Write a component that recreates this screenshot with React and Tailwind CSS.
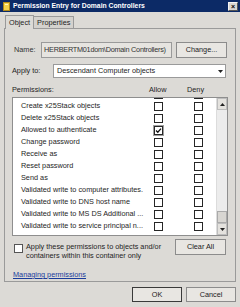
import React from "react";

function Box({ checked, focus }) {
  return (
    <div className={"flex items-center justify-center w-[11px] h-[11px] " + (focus ? "border border-[#a0a0a0] bg-[#f4f4f4]" : "")}>
      <div className="w-[9px] h-[9px] border border-[#262626] bg-white flex items-center justify-center">
        {checked ? (
          <svg width="7" height="7" viewBox="0 0 7 7">
            <path d="M1 3.5 L2.8 5.3 L6 1.6" stroke="#111" strokeWidth="1.3" fill="none" />
          </svg>
        ) : null}
      </div>
    </div>
  );
}

function Btn({ children, className = "", def }) {
  return (
    <div
      className={
        "flex items-center justify-center bg-[#e8e6e2] border " +
        (def ? "border-[#3a3a3a] " : "border-[#8c8c8c] ") +
        className
      }
    >
      <span className="text-[#222]">{children}</span>
    </div>
  );
}

const rows = [
  ["Create x25Stack objects (parent)", false],
  ["Create x25Stack objects", false],
  ["Delete x25Stack objects", false],
  ["Allowed to authenticate", true],
  ["Change password", false],
  ["Receive as", false],
  ["Reset password", false],
  ["Send as", false],
  ["Validated write to computer attributes.", false],
  ["Validated write to DNS host name", false],
  ["Validated write to MS DS Additional ...", false],
  ["Validated write to service principal n...", false],
];

export default function App() {
  return (
    <div className="w-[240px] h-[307px] bg-[#dcdad6] flex flex-col overflow-hidden font-['Liberation_Sans',sans-serif] text-[7.3px] text-[#1e1e1e] leading-none">
      {/* Title bar */}
      <div className="h-[12px] bg-[#0c2a66] flex items-center pl-[3px] pr-[2px]">
        <svg width="7" height="9" viewBox="0 0 7 9" className="shrink-0">
          <rect x="0.5" y="0.5" width="6" height="8" fill="#f3d24a" stroke="#b08a1a" />
          <rect x="2" y="2" width="3" height="1" fill="#fff7c0" />
        </svg>
        <span className="ml-[3px] text-white font-bold text-[6.8px] whitespace-nowrap">
          Permission Entry for Domain Controllers
        </span>
        <div className="ml-auto w-[10px] h-[9px] bg-[#d8d6d2] border border-[#f4f4f4] border-r-[#555] border-b-[#555] flex items-center justify-center text-[7px] font-bold text-black">
          ×
        </div>
      </div>

      {/* Tabs */}
      <div className="h-[16px] flex items-end pl-[5px]">
        <div className="h-[14px] px-[3px] flex items-center border border-b-0 border-[#9a9a9a] bg-[#dcdad6] relative top-[1px]">
          Object
        </div>
        <div className="h-[12px] px-[3px] flex items-center border border-l-0 border-b-0 border-[#9a9a9a] bg-[#d4d2ce]">
          Properties
        </div>
      </div>

      {/* Panel */}
      <div className="mx-[4px] h-[254px] border border-[#9a9a9a] flex flex-col pl-[7px] pr-[8px]">
        {/* Name */}
        <div className="mt-[13px] h-[16px] flex items-center">
          <span className="w-[29px] pl-[2px] text-[#333]">Name:</span>
          <div className="w-[131px] h-[16px] border border-[#9a9a9a] bg-[#e6e4e0] flex items-center pl-[2px] text-[#333] whitespace-nowrap overflow-hidden tracking-[-0.25px]">
            HERBERTM01dom\Domain Controllers)
          </div>
          <Btn className="ml-[4px] w-[51px] h-[16px]">Change...</Btn>
        </div>

        {/* Apply to */}
        <div className="mt-[6px] h-[14px] flex items-center">
          <span className="w-[41px]">Apply to:</span>
          <div className="w-[173px] h-[14px] border border-[#9a9a9a] bg-white flex items-center pl-[3px]">
            <span className="flex-1">Descendant Computer objects</span>
            <div className="w-[10px] h-[12px] flex items-center justify-center">
              <svg width="5" height="3" viewBox="0 0 5 3">
                <path d="M0 0 H5 L2.5 3 Z" fill="#222" />
              </svg>
            </div>
          </div>
        </div>

        {/* Permissions header */}
        <div className="mt-[7px] h-[10px] flex items-center">
          <span className="w-[137px]">Permissions:</span>
          <span className="w-[38px]">Allow</span>
          <span>Deny</span>
        </div>

        {/* List */}
        <div className="mt-[2px] w-[216px] h-[139px] border border-[#8e8e8e] bg-white flex overflow-hidden">
          <div className="flex-1 overflow-hidden">
            <div className="-mt-[10px] flex flex-col">
              {rows.map(([label, checked], i) => (
                <div key={i} className="h-[12px] flex items-center">
                  <span className="w-[140px] pl-[8px] whitespace-nowrap overflow-hidden">{label}</span>
                  <div className="w-[40px] flex">
                    <Box checked={checked} focus={checked} />
                  </div>
                  <Box />
                </div>
              ))}
            </div>
          </div>
          {/* Scrollbar */}
          <div className="w-[11px] flex flex-col bg-[#ececec] border-l border-[#dcdcdc]">
            <div className="h-[12px] bg-[#e4e2de] border border-[#bdbdbd] flex items-center justify-center">
              <svg width="5" height="3" viewBox="0 0 5 3">
                <path d="M0 3 H5 L2.5 0 Z" fill="#222" />
              </svg>
            </div>
            <div className="flex-1" />
            <div className="h-[12px] bg-[#d8d6d2] border border-[#aaa]" />
            <div className="h-[12px] bg-[#e4e2de] border border-[#bdbdbd] flex items-center justify-center">
              <svg width="5" height="3" viewBox="0 0 5 3">
                <path d="M0 0 H5 L2.5 3 Z" fill="#222" />
              </svg>
            </div>
          </div>
        </div>

        {/* Apply checkbox + Clear All */}
        <div className="mt-[3px] flex items-start">
          <div className="ml-[2px] mt-[5px] w-[9px] h-[9px] border border-[#555] bg-white" />
          <div className="ml-[3px] mt-[3px] w-[150px] leading-[9px]">
            Apply these permissions to objects and/or
            <br />
            containers within this container only
          </div>
          <Btn className="ml-[-1px] w-[51px] h-[16px]">Clear All</Btn>
        </div>

        {/* Link */}
        <div className="mt-[11px] pl-[1px]">
          <span className="text-[#1a3c9c] underline">Managing permissions</span>
        </div>
      </div>

      {/* Bottom buttons */}
      <div className="mt-[5px] flex justify-end pr-[4px] gap-[4px]">
        <Btn def className="w-[50px] h-[15px]">OK</Btn>
        <Btn className="w-[50px] h-[15px]">Cancel</Btn>
      </div>
    </div>
  );
}
